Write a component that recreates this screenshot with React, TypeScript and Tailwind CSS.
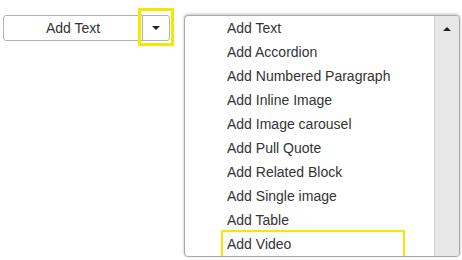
const items = [
  "Add Text",
  "Add Accordion",
  "Add Numbered Paragraph",
  "Add Inline Image",
  "Add Image carousel",
  "Add Pull Quote",
  "Add Related Block",
  "Add Single image",
  "Add Table",
  "Add Video",
];

export default function App() {
  return (
    <div
      className="w-[462px] h-[260px] bg-white flex items-start text-[14px] text-[#333]"
      style={{ fontFamily: '"Liberation Sans", Arial, sans-serif' }}
    >
      {/* split button */}
      <div className="relative mt-[15px] ml-[3px] flex h-[26px] w-[167px] rounded-[3px] border border-[#b3b3b3] bg-white">
        <div className="flex flex-1 items-center justify-center">Add Text</div>
        <div className="flex w-[27px] items-center justify-center border-l border-[#b3b3b3]">
          <span className="h-0 w-0 border-x-[4px] border-t-[4px] border-x-transparent border-t-[#222]" />
        </div>
        <div className="absolute left-[134px] top-[-8px] h-[38px] w-[36px] border-[3px] border-[#f7e600]" />
      </div>

      {/* dropdown list */}
      <div className="ml-[14px] mt-[15px] flex h-[242px] w-[276px] overflow-hidden rounded-[4px] border border-[#a8a8a8] bg-white shadow-[0_-1px_3px_rgba(0,0,0,0.25)]">
        <ul className="flex-1">
          {items.map((label) => (
            <li key={label} className="relative flex h-[24px] items-center pl-[42px]">
              {label}
              {label === "Add Video" && (
                <div className="absolute left-[36px] top-[-2px] h-[28px] w-[184px] border-2 border-[#f7e600]" />
              )}
            </li>
          ))}
        </ul>
        <div className="flex w-[25px] justify-center border-l border-[#cfcfcf] bg-[#e8e8e8] pt-[11px]">
          <span className="h-0 w-0 border-x-[4px] border-b-[4px] border-x-transparent border-b-[#222]" />
        </div>
      </div>
    </div>
  );
}
